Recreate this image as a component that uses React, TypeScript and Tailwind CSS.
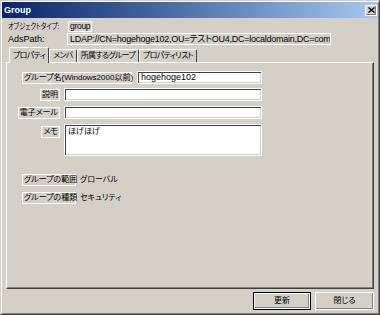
import React from "react";

const sunkenStatic = "border-t border-l border-[#808080] border-b border-r border-white";
const sunkenInput =
  "bg-white border-t border-l border-[#808080] border-b border-r border-white shadow-[inset_1px_1px_0_#404040,inset_-1px_-1px_0_#d4d0c8]";
const raised =
  "border-t border-l border-white border-b border-r border-[#404040] shadow-[inset_-1px_-1px_0_#808080]";

function Label({ children, className = "" }: { children: React.ReactNode; className?: string }) {
  return (
    <div className={`${sunkenStatic} h-[12px] px-[1px] flex items-center leading-none whitespace-nowrap ${className}`}>
      {children}
    </div>
  );
}

function Tab({ label, active = false }: { label: string; active?: boolean }) {
  if (active) {
    return (
      <div className="relative z-10 -mb-px h-[16px] px-[3px] flex items-center bg-[#d4d0c8] border-t border-l border-white border-r border-r-[#404040] rounded-tl-[2px] rounded-tr-[2px] whitespace-nowrap tracking-[-0.7px]">
        {label}
      </div>
    );
  }
  return (
    <div className="h-[13px] px-[3px] flex items-center border-t border-l border-white border-r border-r-[#404040] rounded-tl-[2px] rounded-tr-[2px] whitespace-nowrap tracking-[-0.7px]">
      {label}
    </div>
  );
}

export default function App() {
  return (
    <div className="w-[380px] h-[315px] bg-[#d4d0c8] border-t border-l border-[#d4d0c8] border-b border-r border-b-[#404040] border-r-[#404040] font-['Liberation_Sans','Noto_Sans_CJK_JP',sans-serif] text-[8px] text-black [font-feature-settings:'palt']">
      <div className="h-full flex flex-col border-t border-l border-white border-b border-r border-b-[#808080] border-r-[#808080]">
        {/* title bar */}
        <div className="h-[16px] flex items-center justify-between bg-gradient-to-r from-[#0a246a] to-[#a6caf0] pl-[2px] pr-[1px]">
          <span className="text-white text-[9px] font-semibold leading-none">Group</span>
          <div className={`w-[12px] h-[11px] bg-[#d4d0c8] flex items-center justify-center ${raised}`}>
            <svg width="7" height="6" viewBox="0 0 7 6">
              <path d="M0.5 0.5 L6.5 5.5 M6.5 0.5 L0.5 5.5" stroke="#000" strokeWidth="1.4" />
            </svg>
          </div>
        </div>

        {/* header rows */}
        <div className="flex items-center pl-[6px] mt-[3px]">
          <div className="w-[60px] leading-none">
            <span className="inline-block whitespace-nowrap origin-left scale-x-[0.78]">オブジェクトタイプ:</span>
          </div>
          <div className={`${sunkenStatic} h-[11px] px-[1px] flex items-center leading-none text-[8.5px] tracking-[-0.3px]`}>group</div>
        </div>
        <div className="flex items-center pl-[6px] mt-[1px]">
          <span className="w-[59px] leading-none text-[9px]">AdsPath:</span>
          <div className={`${sunkenStatic} w-[264px] h-[12px] px-[2px] flex items-center leading-none whitespace-nowrap overflow-hidden text-[9px] tracking-[-0.25px]`}>
            LDAP://CN=hogehoge102,OU=テストOU4,DC=localdomain,DC=com
          </div>
        </div>

        {/* tabs */}
        <div className="flex items-end h-[16px] pl-[7px] mt-[1px]">
          <Tab label="プロパティ" active />
          <Tab label="メンバ" />
          <Tab label="所属するグループ" />
          <Tab label="プロパティリスト" />
        </div>

        {/* tab panel */}
        <div className="mx-[4px] h-[227px] border-t border-l border-white border-b border-r border-b-[#404040] border-r-[#404040] shadow-[inset_-1px_-1px_0_#808080]">
          <div className="flex flex-col pt-[8px]">
            <div className="flex items-center">
              <Label className="ml-[15px] w-[110px]">グループ名(Windows2000以前)</Label>
              <div className={`${sunkenInput} ml-[5px] w-[125px] h-[13px] pl-[3px] flex items-center leading-none text-[9px]`}>
                hogehoge102
              </div>
            </div>

            <div className="flex items-center mt-[4px]">
              <div className="w-[53px] flex justify-end">
                <Label>説明</Label>
              </div>
              <div className={`${sunkenInput} ml-[4px] w-[198px] h-[13px]`} />
            </div>

            <div className="flex items-center mt-[5px]">
              <div className="w-[53px] flex justify-end">
                <Label>電子メール</Label>
              </div>
              <div className={`${sunkenInput} ml-[4px] w-[198px] h-[13px]`} />
            </div>

            <div className="flex items-start mt-[5px]">
              <div className="w-[53px] flex justify-end mt-[2px]">
                <Label>メモ</Label>
              </div>
              <div className={`${sunkenInput} ml-[4px] w-[198px] h-[32px] pl-[3px] pt-[3px] leading-none`}>
                ほげほげ
              </div>
            </div>

            <div className="flex items-center mt-[18px]">
              <Label className="ml-[15px] w-[54px]">グループの範囲</Label>
              <span className="ml-[4px] leading-none">グローバル</span>
            </div>

            <div className="flex items-center mt-[6px]">
              <Label className="ml-[15px] w-[54px]">グループの種類</Label>
              <span className="ml-[4px] leading-none">セキュリティ</span>
            </div>
          </div>
        </div>

        {/* buttons */}
        <div className="flex justify-end gap-[4px] pr-[4px] mt-[3px]">
          <div className="border border-black">
            <div className={`w-[56px] h-[16px] flex items-center justify-center leading-none ${raised}`}>更新</div>
          </div>
          <div className={`w-[59px] h-[18px] flex items-center justify-center leading-none ${raised}`}>閉じる</div>
        </div>
      </div>
    </div>
  );
}
